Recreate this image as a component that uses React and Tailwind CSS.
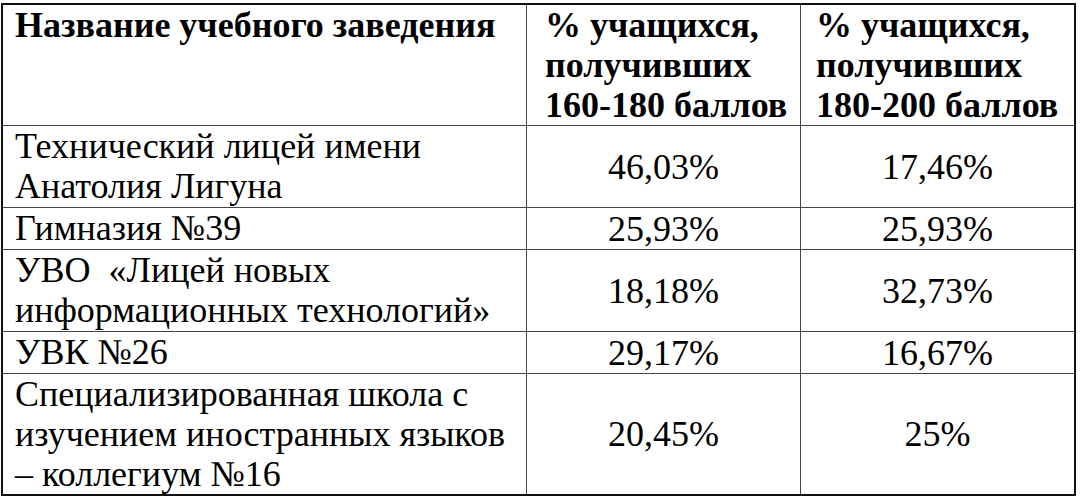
import React from "react";

const rows = [
  { name: ["Технический лицей имени", "Анатолия Лигуна"], a: "46,03%", b: "17,46%" },
  { name: ["Гимназия №39"], a: "25,93%", b: "25,93%" },
  { name: ["УВО\u00a0 «Лицей новых", "информационных технологий»"], a: "18,18%", b: "32,73%" },
  { name: ["УВК №26"], a: "29,17%", b: "16,67%" },
  {
    name: ["Специализированная школа с", "изучением иностранных языков", "– коллегиум №16"],
    a: "20,45%",
    b: "25%",
  },
];

function Lines({ items }) {
  return items.map((line, i) => (
    <React.Fragment key={i}>
      {line}
      {i < items.length - 1 && <br />}
    </React.Fragment>
  ));
}

export default function App() {
  return (
    <div className="w-[1080px] h-[501px] bg-white pt-[3px] pl-[1px] font-serif text-[36px] leading-[40px] text-black">
      <div className="grid w-max grid-cols-[523px_273px_273px] gap-px border-2 border-[#111] bg-[#444] font-[Liberation_Serif,serif]">
        <div className="bg-white pl-[12px] font-bold [font-family:Liberation_Serif,serif]">
          Название учебного заведения
        </div>
        <div className="bg-white pl-[18px] font-bold [font-family:Liberation_Serif,serif]">
          <Lines items={["% учащихся,", "получивших", "160-180 баллов"]} />
        </div>
        <div className="bg-white pl-[15px] font-bold [font-family:Liberation_Serif,serif]">
          <Lines items={["% учащихся,", "получивших", "180-200 баллов"]} />
        </div>
        {rows.map((r, i) => (
          <React.Fragment key={i}>
            <div
              className={
                i < rows.length - 1
                  ? "bg-white pl-[12px] pb-[1px] whitespace-nowrap [font-family:Liberation_Serif,serif]"
                  : "bg-white pl-[12px] whitespace-nowrap [font-family:Liberation_Serif,serif]"
              }
            >
              <Lines items={r.name} />
            </div>
            <div className="flex items-center justify-center bg-white [font-family:Liberation_Serif,serif]">
              {r.a}
            </div>
            <div className="flex items-center justify-center bg-white [font-family:Liberation_Serif,serif]">
              {r.b}
            </div>
          </React.Fragment>
        ))}
      </div>
    </div>
  );
}
